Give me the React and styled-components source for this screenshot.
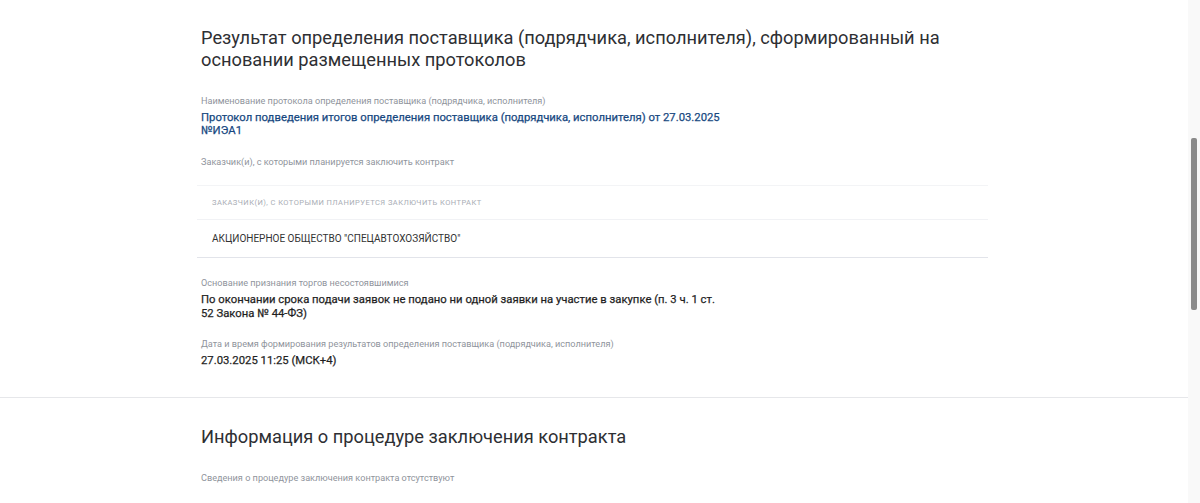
import React from "react";
import styled, { createGlobalStyle } from "styled-components";

const Global = createGlobalStyle`
  html, body { margin: 0; padding: 0; background: #fff; }
  body { font-family: Roboto, "Noto Sans", sans-serif; color: #222; overflow: hidden; }
`;

const Page = styled.div`
  display: flex;
  width: 1200px;
  height: 503px;
  overflow: hidden;
`;

const Main = styled.div`
  flex: 1;
  display: flex;
  flex-direction: column;
`;

const Section = styled.section`
  padding: ${(p) => p.$pad};
  border-bottom: ${(p) => (p.$divider ? "1px solid #e6e7ea" : "none")};
`;

const Inner = styled.div`
  margin-left: 201px;
  width: 787px;
  display: flex;
  flex-direction: column;
`;

const Title = styled.h2`
  margin: 0 0 ${(p) => p.$mb}px;
  font-size: 18.25px;
  line-height: 22px;
  font-weight: 400;
  color: #2e2f33;
  max-width: 770px;
`;

const Label = styled.div`
  font-size: 9.15px;
  line-height: 12px;
  color: #8f949c;
  margin-bottom: ${(p) => p.$mb ?? 4}px;
`;

const LinkValue = styled.a`
  font-size: 11.3px;
  line-height: 13px;
  font-weight: 400;
  color: #17487f;
  text-decoration: none;
  max-width: 530px;
  margin-bottom: 19px;
  -webkit-text-stroke: 0.25px #17487f;
`;

const Value = styled.div`
  font-size: 11.3px;
  line-height: 14px;
  font-weight: 400;
  color: #1f1f1f;
  max-width: 516px;
  margin-bottom: ${(p) => p.$mb ?? 0}px;
  -webkit-text-stroke: 0.25px #1f1f1f;
`;

const Table = styled.div`
  margin: 17px 0 19px -4px;
  display: flex;
  flex-direction: column;
  border-top: 1px solid #f3f4f6;
  border-bottom: 1px solid #e2e4ea;
`;

const HeadRow = styled.div`
  height: 33px;
  display: flex;
  align-items: center;
  padding-left: 15px;
  border-bottom: 1px solid #f1f2f5;
  font-size: 7.5px;
  letter-spacing: 0.45px;
  text-transform: uppercase;
  color: #a9adb5;
`;

const BodyRow = styled.div`
  height: 37px;
  display: flex;
  align-items: center;
  padding-left: 15px;
  font-size: 10px;
  color: #333;
`;

const Track = styled.div`
  width: 12px;
  background: #f9f9f9;
  display: flex;
  justify-content: center;
`;

const Thumb = styled.div`
  width: 6px;
  height: 172px;
  margin-top: 138px;
  border-radius: 2px;
  background: #8b8b8b;
`;

export default function App() {
  return (
    <>
      <Global />
      <Page>
        <Main>
          <Section $pad="27px 0 29px" $divider>
            <Inner>
              <Title $mb={24}>
                Результат определения поставщика (подрядчика, исполнителя), сформированный на основании размещенных протоколов
              </Title>
              <Label>Наименование протокола определения поставщика (подрядчика, исполнителя)</Label>
              <LinkValue href="#">
                Протокол подведения итогов определения поставщика (подрядчика, исполнителя) от 27.03.2025 №ИЭА1
              </LinkValue>
              <Label $mb={0}>Заказчик(и), с которыми планируется заключить контракт</Label>
              <Table>
                <HeadRow>Заказчик(и), с которыми планируется заключить контракт</HeadRow>
                <BodyRow>АКЦИОНЕРНОЕ ОБЩЕСТВО "СПЕЦАВТОХОЗЯЙСТВО"</BodyRow>
              </Table>
              <Label>Основание признания торгов несостоявшимися</Label>
              <Value $mb={17}>
                По окончании срока подачи заявок не подано ни одной заявки на участие в закупке (п. 3 ч. 1 ст. 52 Закона № 44-ФЗ)
              </Value>
              <Label>Дата и время формирования результатов определения поставщика (подрядчика, исполнителя)</Label>
              <Value>27.03.2025 11:25 (МСК+4)</Value>
            </Inner>
          </Section>
          <Section $pad="28px 0 0">
            <Inner>
              <Title $mb={24}>Информация о процедуре заключения контракта</Title>
              <Label>Сведения о процедуре заключения контракта отсутствуют</Label>
            </Inner>
          </Section>
        </Main>
        <Track>
          <Thumb />
        </Track>
      </Page>
    </>
  );
}
